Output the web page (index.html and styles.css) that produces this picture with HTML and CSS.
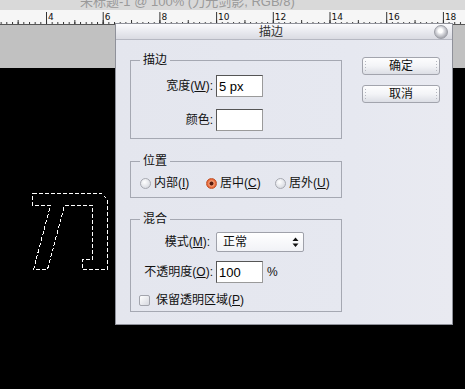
FILE: index.html
```html
<!DOCTYPE html>
<html lang="zh-CN">
<head>
<meta charset="utf-8">
<title>描边</title>
<link rel="stylesheet" href="styles.css">
</head>
<body>
<div class="app">
  <div class="doc-title"><span>未标题-1 @ 100% (刀光剑影, RGB/8)</span></div>
  <div class="ruler">
    <svg width="465" height="15" viewBox="0 0 465 15">
      <defs>
        <pattern id="minor" patternUnits="userSpaceOnUse" x="46" y="0" width="5.67" height="15">
          <rect x="0" y="12" width="1" height="3" fill="#333"/>
        </pattern>
        <pattern id="medium" patternUnits="userSpaceOnUse" x="46" y="0" width="28.35" height="15">
          <rect x="0" y="10" width="1" height="5" fill="#333"/>
        </pattern>
        <pattern id="major" patternUnits="userSpaceOnUse" x="46" y="0" width="56.7" height="15">
          <rect x="0" y="2" width="1" height="13" fill="#333"/>
        </pattern>
      </defs>
      <rect width="465" height="15" fill="#f6f6f6"/>
      <rect width="465" height="15" fill="url(#minor)"/>
      <rect width="465" height="15" fill="url(#medium)"/>
      <rect width="465" height="15" fill="url(#major)"/>
      <rect x="0" y="14" width="465" height="1" fill="#555"/>
      <g class="ruler-num">
        <text x="48" y="9.5">4</text>
        <text x="104.7" y="9.5">6</text>
        <text x="161.4" y="9.5">8</text>
        <text x="218.1" y="9.5">10</text>
        <text x="274.8" y="9.5">12</text>
        <text x="331.5" y="9.5">14</text>
        <text x="388.2" y="9.5">16</text>
        <text x="444.9" y="9.5">18</text>
      </g>
    </svg>
  </div>
  <div class="pasteboard"></div>
  <div class="canvas">
    <svg class="ants" width="82" height="82" viewBox="0 0 82 82">
      <path d="M2.5,2.5 H71.5 L77.5,8.5 V78.5 H52.5 V68.5 H62.5 V14.5 H34.5 L17.5,78.5 H3.5 L20.5,14.5 H2.5 Z" fill="none" stroke="#fff" stroke-width="1" stroke-dasharray="4 2"/>
    </svg>
  </div>

  <div class="dialog">
    <div class="titlebar">
      <div class="title">描边</div>
      <div class="close"></div>
    </div>
    <div class="body">
      <div class="groups">
        <fieldset class="group g1">
          <legend>描边</legend>
          <div class="form">
            <label class="lbl">宽度(<u>W</u>):</label>
            <input class="field" type="text" value="5 px">
            <label class="lbl">颜色:</label>
            <div class="field swatch"></div>
          </div>
        </fieldset>
        <fieldset class="group g2">
          <legend>位置</legend>
          <div class="radios">
            <div class="opt"><span class="radio"></span><span>内部(<u>I</u>)</span></div>
            <div class="opt"><span class="radio on"></span><span>居中(<u>C</u>)</span></div>
            <div class="opt"><span class="radio"></span><span>居外(<u>U</u>)</span></div>
          </div>
        </fieldset>
        <fieldset class="group g3">
          <legend>混合</legend>
          <div class="form form3">
            <label class="lbl lbl-mode">模式(<u>M</u>):</label>
            <div class="select">
              <span>正常</span>
              <svg width="7" height="11" viewBox="0 0 7 11"><path d="M3.5,0.5 L6.5,4 H0.5 Z M0.5,6.5 H6.5 L3.5,10 Z" fill="#111"/></svg>
            </div>
            <label class="lbl">不透明度(<u>O</u>):</label>
            <div class="pct"><input class="field" type="text" value="100"><span>%</span></div>
            <div class="check-row"><span class="check"></span><span>保留透明区域(<u>P</u>)</span></div>
          </div>
        </fieldset>
      </div>
      <div class="buttons">
        <div class="btn">确定</div>
        <div class="btn">取消</div>
      </div>
    </div>
  </div>
</div>
</body>
</html>
```
FILE: styles.css
```css
html, body {
  margin: 0;
  padding: 0;
  width: 465px;
  height: 389px;
  overflow: hidden;
  background: #000;
}
.app {
  position: relative;
  width: 465px;
  height: 389px;
  display: flex;
  flex-direction: column;
  font-family: "Liberation Sans", "Noto Sans CJK SC", sans-serif;
}
.doc-title {
  height: 10px;
  overflow: hidden;
  background: #d9d9d9;
  padding-left: 80px;
}
.doc-title span {
  display: block;
  margin-top: -6px;
  font-size: 13px;
  line-height: 15px;
  color: #9a9a9a;
  white-space: nowrap;
}
.ruler {
  height: 15px;
}
.ruler svg {
  display: block;
}
.ruler-num text {
  font-family: "DejaVu Sans", "Liberation Sans", sans-serif;
  font-size: 9px;
  fill: #111;
}
.pasteboard {
  height: 43px;
  background: #c1c1c1;
}
.canvas {
  flex: 1;
  background: #000;
  padding: 123px 0 0 30px;
}
.ants {
  display: block;
  shape-rendering: crispEdges;
}

/* dialog */
.dialog {
  position: absolute;
  left: 115px;
  top: 23px;
  width: 338px;
  height: 302px;
  box-sizing: border-box;
  border: 1px solid #8f919a;
  background: linear-gradient(90deg, #e4e6ee 0%, #e6e8f0 70%, #e9eaf1 100%);
  font-size: 12px;
  line-height: 14px;
  color: #111;
}
.titlebar {
  height: 15px;
  display: flex;
  align-items: center;
  background: linear-gradient(#fbfbfd, #e6e7ed 60%, #dadbe2);
  border-bottom: 1px solid #b6b8c2;
}
.title {
  flex: 1;
  text-align: center;
  padding-right: 8px;
  padding-top: 1px;
  font-size: 12px;
  color: #333;
}
.close {
  width: 12px;
  height: 12px;
  margin-right: 4px;
  border-radius: 50%;
  border: 1px solid #9c9ea6;
  background: radial-gradient(circle at 45% 40%, #ffffff 0 2px, #d8d9de 4px, #a9aab1 7px);
}
.body {
  display: flex;
  align-items: flex-start;
  padding: 13px 0 0 14px;
}
.groups {
  width: 212px;
}
.group {
  margin: 0;
  padding: 0;
  border: 1px solid #a5a8b2;
  min-width: 0;
}
.group legend {
  margin-left: 9px;
  padding: 0 3px;
  font-size: 12px;
  line-height: 14px;
}
.g2 { margin-top: 15px; }
.g3 { margin-top: 14px; }

.form {
  display: grid;
  grid-template-columns: 82px auto;
  column-gap: 3px;
  row-gap: 12px;
  align-items: center;
  padding: 8px 0 7px;
}
.form3 {
  padding: 6px 0 4px;
  row-gap: 9px;
}
.lbl {
  text-align: right;
  white-space: nowrap;
}
.lbl-mode {
  padding-right: 3px;
}
.field {
  display: block;
  width: 47px;
  height: 22px;
  box-sizing: border-box;
  margin: 0;
  border: 1px solid;
  border-color: #555 #9a9a9a #9a9a9a #555;
  background: #fff;
  padding: 0 2px;
  font-family: "Liberation Sans", sans-serif;
  font-size: 13px;
  color: #000;
  outline: none;
}
.swatch {
  height: 22px;
}
.select {
  width: 88px;
  height: 20px;
  box-sizing: border-box;
  border: 1px solid #9fa1aa;
  border-radius: 2px;
  background: linear-gradient(#ffffff, #f1f2f6);
  display: flex;
  align-items: center;
  justify-content: space-between;
  padding: 0 4px 0 6px;
}
.select svg { display: block; }
.pct {
  display: flex;
  align-items: center;
  gap: 4px;
  font-family: "Liberation Sans", sans-serif;
}
.check-row {
  grid-column: 1 / -1;
  display: flex;
  align-items: center;
  gap: 6px;
  padding-left: 8px;
  margin-top: 1px;
}
.check {
  width: 11px;
  height: 11px;
  box-sizing: border-box;
  border: 1px solid #a2a4ac;
  border-radius: 2px;
  background: linear-gradient(135deg, #ffffff, #d6d8df);
}

.radios {
  display: grid;
  grid-template-columns: 66px 69px auto;
  padding: 8px 0 7px 9px;
}
.opt {
  display: flex;
  align-items: center;
  gap: 3px;
  white-space: nowrap;
}
.radio {
  width: 11px;
  height: 11px;
  box-sizing: border-box;
  border-radius: 50%;
  border: 1px solid #a7a9b1;
  background: radial-gradient(circle at 40% 35%, #ffffff, #dcdee4 70%, #c4c6cd);
}
.radio.on {
  border-color: #c2562c;
  background: radial-gradient(circle, #5a1a0c 0 1.6px, #f7a27a 2.4px, #e8683a 4px, #d45226);
}

.buttons {
  margin: 4px 0 0 20px;
  display: flex;
  flex-direction: column;
  gap: 10px;
}
.btn {
  width: 78px;
  height: 18px;
  box-sizing: border-box;
  border: 1px solid #a2a4ad;
  border-radius: 3px;
  background:
    repeating-linear-gradient(#b5b7bf 0 1px, transparent 1px 3px) 2px 3px / 1px 10px no-repeat,
    repeating-linear-gradient(#b5b7bf 0 1px, transparent 1px 3px) right 2px top 3px / 1px 10px no-repeat,
    linear-gradient(#fdfdfe, #f3f4f7 50%, #dcdee5);
  text-align: center;
  line-height: 16px;
  font-size: 12px;
}
```
